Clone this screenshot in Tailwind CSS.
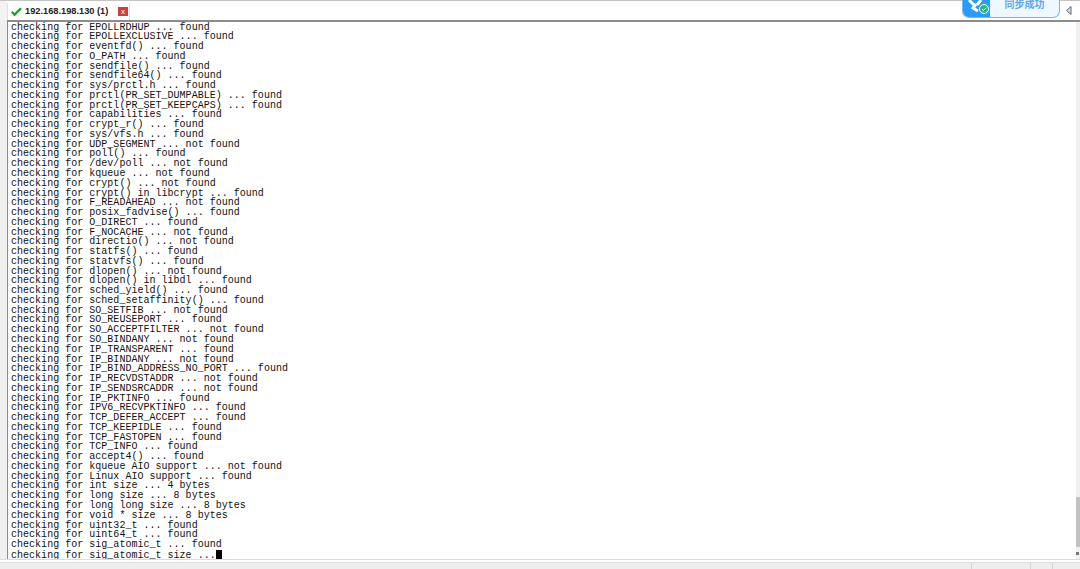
<!DOCTYPE html>
<html lang="en">
<head>
<meta charset="UTF-8">
<title>192.168.198.130 (1)</title>
<script src="https://cdn.jsdelivr.net/npm/@tailwindcss/browser@4"></script>
</head>
<body class="w-[1080px] h-[569px] overflow-hidden bg-[#f0f0f0] flex flex-col font-['Liberation_Sans',sans-serif]">
  <!-- tab bar -->
  <div class="relative h-[20px] shrink-0 flex items-end bg-white border-t border-[#c4c4c4]">
    <div class="w-[7px] h-full shrink-0 bg-[#f3f3f3]"></div>
    <div class="flex items-center h-[17px] w-[123px] pl-[3px] gap-[3px] border-r border-l border-[#e0e0e0] bg-white whitespace-nowrap">
      <svg class="shrink-0" width="11" height="10" viewBox="0 0 11 10"><path d="M0 5.500l1.500-1.500 2 2L9.200 .5 10.800 2 3.500 9.500z" fill="#12a51c"/></svg>
      <span class="w-[84px] shrink-0 text-[9.250px] font-bold text-[#222] leading-none">192.168.198.130 (1)</span>
      <span class="ml-[6px] w-[10px] h-[9px] shrink-0 bg-[#c9423f] text-white text-[8px] leading-[9px] text-center">x</span>
    </div>
    <div class="flex-1"></div>
    <svg class="mr-[8px] mb-[5px]" width="6" height="9" viewBox="0 0 6 9"><path d="M5 .5v8L.5 4.500z" fill="#ddd" stroke="#666"/></svg>
    <!-- sync toast -->
    <div class="absolute left-[962px] top-[-1px] w-[98px] h-[18px] flex rounded-b-[7px] border border-[#6fb8f5] border-t-0 bg-[#f0f8ff] overflow-hidden">
      <div class="relative w-[27px] bg-[#2a9bf8] overflow-hidden">
        <svg class="absolute left-[3px] top-0" width="20" height="14" viewBox="0 0 20 14"><path d="M3 0l5 5M10 4l-3 4 5 3M15 0l-4 5" fill="none" stroke="#fff" stroke-width="3"/></svg>
      </div>
      <span class="flex-1 text-center text-[10px] leading-[8px] font-bold text-[#5aa9ec] font-['Noto_Sans_CJK_SC',sans-serif]">同步成功</span>
    </div>
    <svg class="absolute left-[979px] top-[3px]" width="10" height="10" viewBox="0 0 10 10"><circle cx="5" cy="5" r="4.500" fill="#26b78c" stroke="#fff"/><path d="M3 5l1.500 1.500L7 3.800" fill="none" stroke="#fff"/></svg>
  </div>

  <!-- terminal -->
  <div class="h-[539px] shrink-0 flex border-t-2 border-[#8c8c8c] ml-[7px] border-l border-l-[#8c8c8c] bg-white">
    <div class="flex-1 pl-[3px] pt-[0.5px] font-['Liberation_Mono',monospace] text-[10px] leading-[9.76px] tracking-[0.02px] text-[#111] whitespace-nowrap">
      <div>checking for EPOLLRDHUP ... found</div>
      <div>checking for EPOLLEXCLUSIVE ... found</div>
      <div>checking for eventfd() ... found</div>
      <div>checking for O_PATH ... found</div>
      <div>checking for sendfile() ... found</div>
      <div>checking for sendfile64() ... found</div>
      <div>checking for sys/prctl.h ... found</div>
      <div>checking for prctl(PR_SET_DUMPABLE) ... found</div>
      <div>checking for prctl(PR_SET_KEEPCAPS) ... found</div>
      <div>checking for capabilities ... found</div>
      <div>checking for crypt_r() ... found</div>
      <div>checking for sys/vfs.h ... found</div>
      <div>checking for UDP_SEGMENT ... not found</div>
      <div>checking for poll() ... found</div>
      <div>checking for /dev/poll ... not found</div>
      <div>checking for kqueue ... not found</div>
      <div>checking for crypt() ... not found</div>
      <div>checking for crypt() in libcrypt ... found</div>
      <div>checking for F_READAHEAD ... not found</div>
      <div>checking for posix_fadvise() ... found</div>
      <div>checking for O_DIRECT ... found</div>
      <div>checking for F_NOCACHE ... not found</div>
      <div>checking for directio() ... not found</div>
      <div>checking for statfs() ... found</div>
      <div>checking for statvfs() ... found</div>
      <div>checking for dlopen() ... not found</div>
      <div>checking for dlopen() in libdl ... found</div>
      <div>checking for sched_yield() ... found</div>
      <div>checking for sched_setaffinity() ... found</div>
      <div>checking for SO_SETFIB ... not found</div>
      <div>checking for SO_REUSEPORT ... found</div>
      <div>checking for SO_ACCEPTFILTER ... not found</div>
      <div>checking for SO_BINDANY ... not found</div>
      <div>checking for IP_TRANSPARENT ... found</div>
      <div>checking for IP_BINDANY ... not found</div>
      <div>checking for IP_BIND_ADDRESS_NO_PORT ... found</div>
      <div>checking for IP_RECVDSTADDR ... not found</div>
      <div>checking for IP_SENDSRCADDR ... not found</div>
      <div>checking for IP_PKTINFO ... found</div>
      <div>checking for IPV6_RECVPKTINFO ... found</div>
      <div>checking for TCP_DEFER_ACCEPT ... found</div>
      <div>checking for TCP_KEEPIDLE ... found</div>
      <div>checking for TCP_FASTOPEN ... found</div>
      <div>checking for TCP_INFO ... found</div>
      <div>checking for accept4() ... found</div>
      <div>checking for kqueue AIO support ... not found</div>
      <div>checking for Linux AIO support ... found</div>
      <div>checking for int size ... 4 bytes</div>
      <div>checking for long size ... 8 bytes</div>
      <div>checking for long long size ... 8 bytes</div>
      <div>checking for void * size ... 8 bytes</div>
      <div>checking for uint32_t ... found</div>
      <div>checking for uint64_t ... found</div>
      <div>checking for sig_atomic_t ... found</div>
      <div>checking for sig_atomic_t size ...<span class="inline-block w-[6px] h-[10px] bg-black align-[-2px]"></span></div>
    </div>
    <!-- scrollbar -->
    <div class="w-[4px] bg-[#f0f0f0] flex flex-col justify-end pb-[12px] relative">
      <div class="h-[50px] bg-[#c2c2c2]"></div>
      <div class="absolute left-0 bottom-[4px] w-[3px] h-[3px] bg-[#777]"></div>
    </div>
  </div>

  <!-- status bar -->
  <div class="flex-1 flex flex-col">
    <div class="h-[3px] bg-white border-t border-[#dcdcdc]"></div>
    <div class="flex-1 flex justify-end bg-[#eeeeee] border-t border-[#dcdcdc]">
      <div class="w-[59px] border-l border-[#d4d4d4]"></div>
      <div class="w-[22px] border-l border-[#d4d4d4]"></div>
      <div class="w-[28px] border-l border-[#d4d4d4]"></div>
    </div>
  </div>
</body>
</html>
